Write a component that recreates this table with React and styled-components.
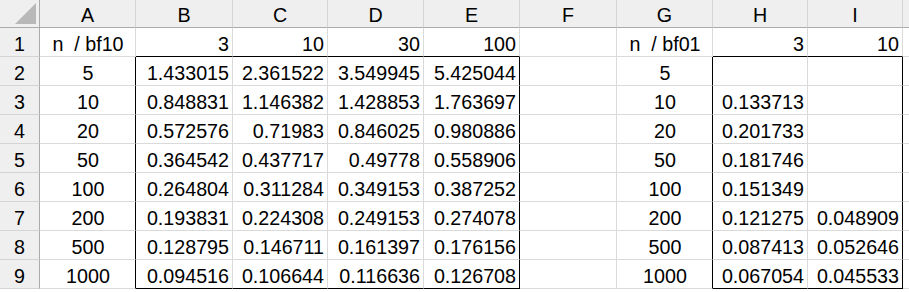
import React from "react";
import styled, { createGlobalStyle } from "styled-components";

const Global = createGlobalStyle`
  html, body { margin: 0; padding: 0; background: #fff; }
  body { font-family: "Liberation Sans", Arial, sans-serif; }
`;

const COLS = [96, 97, 95, 96, 96, 97, 96, 95, 95];
const LETTERS = ["A", "B", "C", "D", "E", "F", "G", "H", "I"];

const Sheet = styled.div`
  display: grid;
  grid-template-columns: 40px ${COLS.map((c) => c + "px").join(" ")} 1fr;
  grid-template-rows: 28px repeat(9, 29px);
  width: 909px;
  font-size: 19.7px;
  color: #000;
`;

const Corner = styled.div`
  position: relative;
  background: #efefef;
  border-right: 1px solid #ababab;
  border-bottom: 1px solid #ababab;
`;

const CornerTri = styled.div`
  position: absolute;
  right: 3px;
  bottom: 3px;
  width: 21px;
  height: 21px;
  background: #b8b8b8;
  clip-path: polygon(100% 0, 100% 100%, 0 100%);
`;

const ColHead = styled.div`
  background: #efefef;
  border-right: 1px solid ${(p) => (p.$last ? "#ababab" : "#d4d4d4")};
  border-bottom: 1px solid #ababab;
  display: flex;
  align-items: flex-end;
  justify-content: center;
  line-height: 22px;
  padding-bottom: 1px;
`;

const RowHead = styled.div`
  background: #efefef;
  border-right: 1px solid #ababab;
  border-bottom: 1px solid #d4d4d4;
  display: flex;
  align-items: flex-end;
  justify-content: center;
  line-height: 22px;
  padding-bottom: 1px;
`;

const Cell = styled.div`
  border-right: 1px solid ${(p) => (p.$br ? "#000" : "#dadada")};
  border-bottom: 1px solid ${(p) => (p.$bb ? "#000" : "#dadada")};
  display: flex;
  align-items: flex-end;
  justify-content: ${(p) => (p.$center ? "center" : "flex-end")};
  padding: 0 3px 1px 4px;
  line-height: 22px;
  white-space: pre;
  overflow: hidden;
`;

const rows = [
  ["n  / bf10", "3", "10", "30", "100", "", "n  / bf01", "3", "10"],
  ["5", "1.433015", "2.361522", "3.549945", "5.425044", "", "5", "", ""],
  ["10", "0.848831", "1.146382", "1.428853", "1.763697", "", "10", "0.133713", ""],
  ["20", "0.572576", "0.71983", "0.846025", "0.980886", "", "20", "0.201733", ""],
  ["50", "0.364542", "0.437717", "0.49778", "0.558906", "", "50", "0.181746", ""],
  ["100", "0.264804", "0.311284", "0.349153", "0.387252", "", "100", "0.151349", ""],
  ["200", "0.193831", "0.224308", "0.249153", "0.274078", "", "200", "0.121275", "0.048909"],
  ["500", "0.128795", "0.146711", "0.161397", "0.176156", "", "500", "0.087413", "0.052646"],
  ["1000", "0.094516", "0.106644", "0.116636", "0.126708", "", "1000", "0.067054", "0.045533"],
];

// black outline boxes: B2:E9 (cols 1-4) and H2:I9 (cols 7-8)
function borders(r, c) {
  const inBody = r >= 1;
  const br = inBody && (c === 0 || c === 4 || c === 6 || c === 8);
  const bb = (r === 0 || r === 8) && ((c >= 1 && c <= 4) || c === 7 || c === 8);
  return { br, bb };
}

export default function App() {
  return (
    <>
      <Global />
      <Sheet>
        <Corner>
          <CornerTri />
        </Corner>
        {LETTERS.map((l) => (
          <ColHead key={l}>{l}</ColHead>
        ))}
        <ColHead $last />
        {rows.map((row, r) => (
          <React.Fragment key={r}>
            <RowHead>{r + 1}</RowHead>
            {row.map((v, c) => {
              const { br, bb } = borders(r, c);
              return (
                <Cell key={c} $br={br} $bb={bb} $center={c === 0 || c === 6}>
                  {v}
                </Cell>
              );
            })}
            <Cell />
          </React.Fragment>
        ))}
      </Sheet>
    </>
  );
}
